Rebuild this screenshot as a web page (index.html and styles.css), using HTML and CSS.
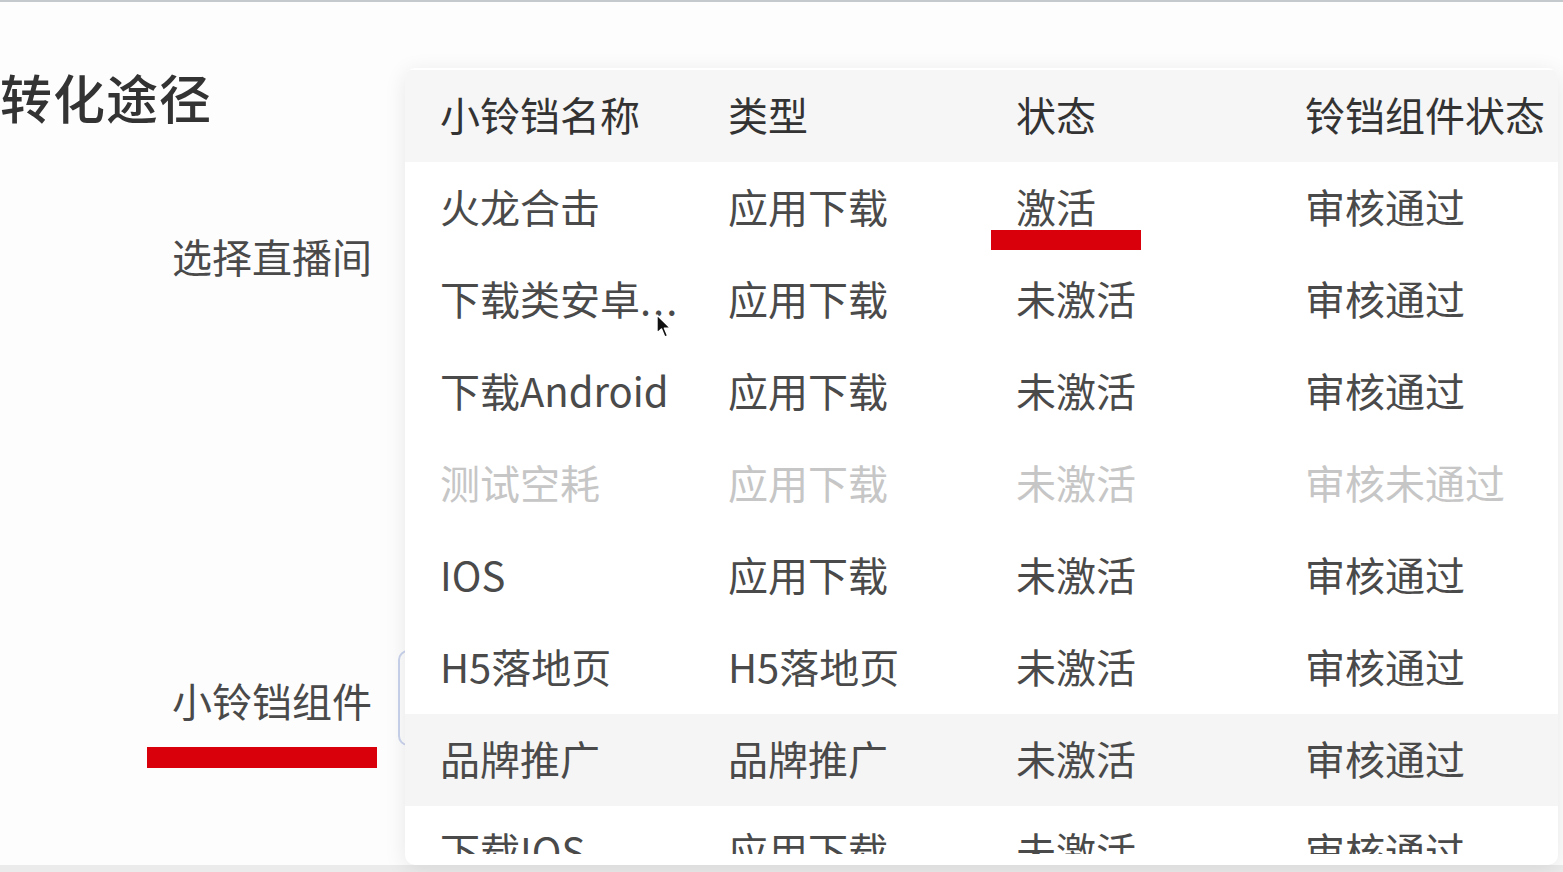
FILE: index.html
```html
<!DOCTYPE html>
<html lang="zh-CN">
<head>
  <meta charset="UTF-8">
  <meta name="viewport" content="width=device-width, initial-scale=1.0">
  <title>转化途径</title>
  <link rel="stylesheet" href="styles.css">
</head>
<body>
  <div class="topline"></div>
  <div class="page">
    <div class="form">
      <h2 class="title">转化途径</h2>
      <div class="form-row row-room">
        <label class="label">选择直播间</label>
      </div>
      <div class="form-row row-bell">
        <label class="label">小铃铛组件</label>
        <div class="select-input"></div>
      </div>
    </div>

    <div class="dropdown">
      <div class="table-head">
        <div class="cell">小铃铛名称</div>
        <div class="cell">类型</div>
        <div class="cell">状态</div>
        <div class="cell">铃铛组件状态</div>
      </div>
      <div class="table-body">
        <div class="table-row">
          <div class="cell">火龙合击</div>
          <div class="cell">应用下载</div>
          <div class="cell">激活</div>
          <div class="cell">审核通过</div>
        </div>
        <div class="table-row">
          <div class="cell">下载类安卓<span class="dots">...</span></div>
          <div class="cell">应用下载</div>
          <div class="cell">未激活</div>
          <div class="cell">审核通过</div>
        </div>
        <div class="table-row">
          <div class="cell">下载Android</div>
          <div class="cell">应用下载</div>
          <div class="cell">未激活</div>
          <div class="cell">审核通过</div>
        </div>
        <div class="table-row disabled">
          <div class="cell">测试空耗</div>
          <div class="cell">应用下载</div>
          <div class="cell">未激活</div>
          <div class="cell">审核未通过</div>
        </div>
        <div class="table-row">
          <div class="cell">IOS</div>
          <div class="cell">应用下载</div>
          <div class="cell">未激活</div>
          <div class="cell">审核通过</div>
        </div>
        <div class="table-row">
          <div class="cell">H5落地页</div>
          <div class="cell">H5落地页</div>
          <div class="cell">未激活</div>
          <div class="cell">审核通过</div>
        </div>
        <div class="table-row hover">
          <div class="cell">品牌推广</div>
          <div class="cell">品牌推广</div>
          <div class="cell">未激活</div>
          <div class="cell">审核通过</div>
        </div>
        <div class="table-row">
          <div class="cell">下载IOS</div>
          <div class="cell">应用下载</div>
          <div class="cell">未激活</div>
          <div class="cell">审核通过</div>
        </div>
      </div>
    </div>

    <div class="mark mark-bell"></div>
    <div class="mark mark-active"></div>

    <svg class="cursor" width="18" height="26" viewBox="0 0 18 26">
      <path d="M1 1 L1 19 L5.5 15 L8.8 23 L11.6 21.8 L8.4 14.2 L14.5 14.2 Z" fill="#111" stroke="#fff" stroke-width="1.4" stroke-linejoin="round"/>
    </svg>
  </div>
  <div class="bottomline"></div>
</body>
</html>
```

FILE: styles.css
```css
* {
  margin: 0;
  padding: 0;
  box-sizing: border-box;
}

body {
  font-family: "Noto Sans CJK SC", "Noto Sans", sans-serif;
  background: #fdfdfd;
  color: #444;
  height: 872px;
  overflow: hidden;
  display: flex;
  flex-direction: column;
}

.topline {
  height: 2px;
  background: #c4c9ce;
}

.page {
  position: relative;
  flex: 1;
}

.bottomline {
  height: 7px;
  background: #ebebeb;
}

.form {
  width: 405px;
}

.title {
  margin-top: 65px;
  font-size: 52px;
  line-height: 60px;
  font-weight: 500;
  color: #333;
  letter-spacing: 1px;
}

.form-row {
  position: relative;
  display: flex;
  align-items: center;
  height: 48px;
}

.row-room {
  margin-top: 107px;
}

.row-bell {
  margin-top: 396px;
}

.label {
  width: 372px;
  text-align: right;
  font-size: 40px;
  line-height: 44px;
  padding-bottom: 4px;
  color: #4a4a4a;
}

.select-input {
  position: absolute;
  left: 398px;
  top: -28px;
  width: 300px;
  height: 96px;
  border: 2px solid #c9d3ec;
  border-radius: 10px;
}

.dropdown {
  position: absolute;
  left: 405px;
  top: 66px;
  width: 1153px;
  height: 797px;
  background: #fff;
  border-radius: 10px;
  padding-top: 2px;
  padding-bottom: 11px;
  box-shadow: 0 4px 22px rgba(0, 0, 0, 0.09);
  display: flex;
  flex-direction: column;
  overflow: hidden;
  z-index: 2;
}

.table-head,
.table-row {
  display: grid;
  grid-template-columns: 288px 288px 289px 1fr;
  padding-left: 35px;
  padding-bottom: 4px;
  align-items: center;
  font-size: 40px;
  white-space: nowrap;
}

.table-head {
  height: 92px;
  flex-shrink: 0;
  background: #f6f6f6;
  color: #333;
}

.table-body {
  flex: 1;
  overflow: hidden;
}

.table-row {
  height: 92px;
  color: #4a4a4a;
}

.dots {
  letter-spacing: 2px;
}

.table-row.hover {
  background: #f5f5f5;
}

.table-row.disabled {
  color: #c6c6c6;
}

.mark {
  position: absolute;
  background: #d9000c;
  z-index: 3;
}

.mark-bell {
  left: 147px;
  top: 745px;
  width: 230px;
  height: 21px;
}

.mark-active {
  left: 991px;
  top: 228px;
  width: 150px;
  height: 20px;
}

.cursor {
  position: absolute;
  left: 656px;
  top: 312px;
  z-index: 4;
}
```
